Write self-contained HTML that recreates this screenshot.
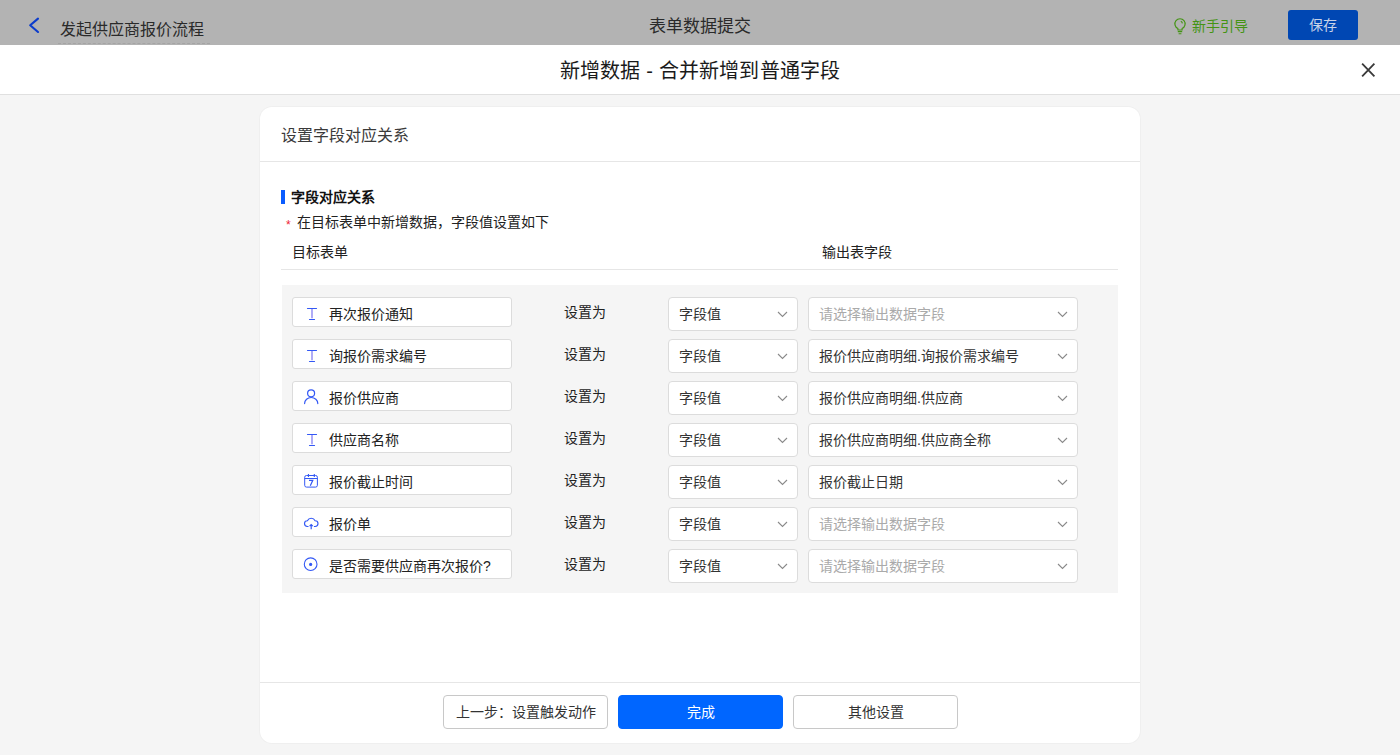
<!DOCTYPE html>
<html lang="zh-CN"><head><meta charset="utf-8">
<style>
*{box-sizing:border-box;margin:0;padding:0}
html,body{width:1400px;height:755px;overflow:hidden;background:#f5f5f5;font-family:"Liberation Sans",sans-serif;color:#333}
.abs{position:absolute;white-space:nowrap}
#top{position:absolute;left:0;top:0;width:1400px;height:45px;background:#b3b3b3}
#mhead{position:absolute;left:0;top:45px;width:1400px;height:50px;background:#fff;border-bottom:1px solid #e0e0e0}
#card{position:absolute;left:260px;top:107px;width:880px;height:636px;background:#fff;border-radius:12px;box-shadow:0 0 0 1px rgba(0,0,0,0.025)}
.t{position:absolute;white-space:nowrap;line-height:1}
.inp{position:absolute;left:292px;width:220px;height:30px;background:#fff;border:1px solid #dcdcdc;border-radius:3px}
.sel{position:absolute;height:34px;background:#fff;border:1px solid #dcdcdc;border-radius:4px}
.btn{position:absolute;top:695px;width:165px;height:34px;border:1px solid #c8c8c8;border-radius:4px;background:#fff;font-size:14px;line-height:32px;text-align:center;color:#333}
</style></head><body>
<div id="top">
  <svg class="abs" style="left:26px;top:15px" width="16" height="20" viewBox="0 0 16 20"><path d="M12 3.6 L4.2 10.3 L12 17" fill="none" stroke="#0c3ccc" stroke-width="2.1" stroke-linecap="round" stroke-linejoin="round"/></svg>
  <div class="t" style="left:60px;top:22px;font-size:16px;color:#2a2a2a">发起供应商报价流程</div>
  <div class="abs" style="left:58px;top:43px;width:152px;border-top:1px dashed #a4a4a4"></div>
  <div class="t" style="left:649px;top:18px;font-size:17px;color:#2a2a2a">表单数据提交</div>
  <svg class="abs" style="left:1172px;top:17px" width="16" height="20" viewBox="0 0 16 20"><path d="M5.9 13V11.45A5.1 5.1 0 1 1 10.1 11.45V13Z" fill="none" stroke="#449414" stroke-width="1.15" stroke-linejoin="round"/><path d="M8.8 4.2A2.6 2.6 0 0 1 10.4 6.4" fill="none" stroke="#449414" stroke-width="1.1"/><path d="M5.8 14.6h4.4M6.6 16.7h2.8" stroke="#449414" stroke-width="1.1"/></svg>
  <div class="t" style="left:1192px;top:19px;font-size:14px;color:#449414">新手引导</div>
  <div class="abs" style="left:1288px;top:10px;width:70px;height:30px;background:#0047b3;border-radius:3px;color:#c8d3e8;font-size:14px;line-height:30px;text-align:center">保存</div>
</div>
<div id="mhead">
  <div class="t" style="left:560px;top:16px;font-size:20px;letter-spacing:0.15px;color:#1a1a1a">新增数据 - 合并新增到普通字段</div>
  <svg class="abs" style="left:1360px;top:17px" width="16" height="16" viewBox="0 0 15 15"><path d="M2 1.5L13.5 13.5M13.5 1.5L2 13.5" stroke="#3a3a3a" stroke-width="1.7"/></svg>
</div>
<div id="card">
  <div class="t" style="left:21px;top:21px;font-size:16px;color:#3a3a3a">设置字段对应关系</div>
  <div class="abs" style="left:0;top:54px;width:880px;border-top:1px solid #e6e6e6"></div>
  <div class="abs" style="left:21px;top:83px;width:4px;height:14px;background:#0a5cff"></div>
  <div class="t" style="left:31px;top:83px;font-size:14px;font-weight:bold;color:#111">字段对应关系</div>
  <div class="t" style="left:26px;top:112px;font-size:12px;color:#e23">*</div>
  <div class="t" style="left:37px;top:108px;font-size:14px;color:#222">在目标表单中新增数据，字段值设置如下</div>
  <div class="t" style="left:32px;top:138px;font-size:14px;color:#222">目标表单</div>
  <div class="t" style="left:562px;top:138px;font-size:14px;color:#222">输出表字段</div>
  <div class="abs" style="left:21px;top:162px;width:837px;border-top:1px solid #e6e6e6"></div>
  <div class="abs" style="left:22px;top:178px;width:836px;height:308px;background:#f5f5f5"></div>
  <div class="abs" style="left:0;top:575px;width:880px;border-top:1px solid #e6e6e6"></div>
</div>
<div id="rows">
<div class="inp" style="top:297px"><svg class="abs" style="left:12px;top:7px" width="14" height="16" viewBox="0 0 14 16"><path d="M7 3.5V13.2" stroke="#7a74f2" stroke-width="1.2"/><path d="M2.5 3.5h9M4.5 14.5h5" fill="none" stroke="#3358f5" stroke-width="1.2" stroke-linecap="round"/></svg><div class="t" style="left:36px;top:9px;font-size:14px;color:#222">再次报价通知</div></div>
<div class="t" style="left:564px;top:305px;font-size:14px;color:#222">设置为</div>
<div class="sel" style="left:668px;top:297px;width:130px"><div class="t" style="left:10px;top:9px;font-size:14px;color:#333">字段值</div><svg class="abs" style="right:9px;top:13px" width="11" height="7" viewBox="0 0 11 7"><path d="M1 1l4.5 4.5L10 1" fill="none" stroke="#8a8a8a" stroke-width="1.1"/></svg></div>
<div class="sel" style="left:808px;top:297px;width:270px"><div class="t" style="left:10px;top:9px;font-size:14px;color:#aaa">请选择输出数据字段</div><svg class="abs" style="right:9px;top:13px" width="11" height="7" viewBox="0 0 11 7"><path d="M1 1l4.5 4.5L10 1" fill="none" stroke="#8a8a8a" stroke-width="1.1"/></svg></div>
<div class="inp" style="top:339px"><svg class="abs" style="left:12px;top:7px" width="14" height="16" viewBox="0 0 14 16"><path d="M7 3.5V13.2" stroke="#7a74f2" stroke-width="1.2"/><path d="M2.5 3.5h9M4.5 14.5h5" fill="none" stroke="#3358f5" stroke-width="1.2" stroke-linecap="round"/></svg><div class="t" style="left:36px;top:9px;font-size:14px;color:#222">询报价需求编号</div></div>
<div class="t" style="left:564px;top:347px;font-size:14px;color:#222">设置为</div>
<div class="sel" style="left:668px;top:339px;width:130px"><div class="t" style="left:10px;top:9px;font-size:14px;color:#333">字段值</div><svg class="abs" style="right:9px;top:13px" width="11" height="7" viewBox="0 0 11 7"><path d="M1 1l4.5 4.5L10 1" fill="none" stroke="#8a8a8a" stroke-width="1.1"/></svg></div>
<div class="sel" style="left:808px;top:339px;width:270px"><div class="t" style="left:10px;top:9px;font-size:14px;color:#333">报价供应商明细.询报价需求编号</div><svg class="abs" style="right:9px;top:13px" width="11" height="7" viewBox="0 0 11 7"><path d="M1 1l4.5 4.5L10 1" fill="none" stroke="#8a8a8a" stroke-width="1.1"/></svg></div>
<div class="inp" style="top:381px"><svg class="abs" style="left:10px;top:6px" width="17" height="17" viewBox="0 0 17 17"><circle cx="8.1" cy="5.3" r="3.5" fill="none" stroke="#3358f5" stroke-width="1.2"/><path d="M1.6 15.6A6.6 6.1 0 0 1 14.8 15.6" fill="none" stroke="#3358f5" stroke-width="1.2" stroke-linecap="round"/></svg><div class="t" style="left:36px;top:9px;font-size:14px;color:#222">报价供应商</div></div>
<div class="t" style="left:564px;top:389px;font-size:14px;color:#222">设置为</div>
<div class="sel" style="left:668px;top:381px;width:130px"><div class="t" style="left:10px;top:9px;font-size:14px;color:#333">字段值</div><svg class="abs" style="right:9px;top:13px" width="11" height="7" viewBox="0 0 11 7"><path d="M1 1l4.5 4.5L10 1" fill="none" stroke="#8a8a8a" stroke-width="1.1"/></svg></div>
<div class="sel" style="left:808px;top:381px;width:270px"><div class="t" style="left:10px;top:9px;font-size:14px;color:#333">报价供应商明细.供应商</div><svg class="abs" style="right:9px;top:13px" width="11" height="7" viewBox="0 0 11 7"><path d="M1 1l4.5 4.5L10 1" fill="none" stroke="#8a8a8a" stroke-width="1.1"/></svg></div>
<div class="inp" style="top:423px"><svg class="abs" style="left:12px;top:7px" width="14" height="16" viewBox="0 0 14 16"><path d="M7 3.5V13.2" stroke="#7a74f2" stroke-width="1.2"/><path d="M2.5 3.5h9M4.5 14.5h5" fill="none" stroke="#3358f5" stroke-width="1.2" stroke-linecap="round"/></svg><div class="t" style="left:36px;top:9px;font-size:14px;color:#222">供应商名称</div></div>
<div class="t" style="left:564px;top:431px;font-size:14px;color:#222">设置为</div>
<div class="sel" style="left:668px;top:423px;width:130px"><div class="t" style="left:10px;top:9px;font-size:14px;color:#333">字段值</div><svg class="abs" style="right:9px;top:13px" width="11" height="7" viewBox="0 0 11 7"><path d="M1 1l4.5 4.5L10 1" fill="none" stroke="#8a8a8a" stroke-width="1.1"/></svg></div>
<div class="sel" style="left:808px;top:423px;width:270px"><div class="t" style="left:10px;top:9px;font-size:14px;color:#333">报价供应商明细.供应商全称</div><svg class="abs" style="right:9px;top:13px" width="11" height="7" viewBox="0 0 11 7"><path d="M1 1l4.5 4.5L10 1" fill="none" stroke="#8a8a8a" stroke-width="1.1"/></svg></div>
<div class="inp" style="top:465px"><svg class="abs" style="left:10px;top:7px" width="16" height="16" viewBox="0 0 16 16"><rect x="1.7" y="2.5" width="12.7" height="11.6" rx="1.8" fill="none" stroke="#3358f5" stroke-width="1"/><path d="M1.7 5.45h12.7M5.45 1v3M11.3 1v3" fill="none" stroke="#3358f5" stroke-width="1.1"/><path d="M6 7.3h3.8L7.3 12.7" fill="none" stroke="#3358f5" stroke-width="1.2"/></svg><div class="t" style="left:36px;top:9px;font-size:14px;color:#222">报价截止时间</div></div>
<div class="t" style="left:564px;top:473px;font-size:14px;color:#222">设置为</div>
<div class="sel" style="left:668px;top:465px;width:130px"><div class="t" style="left:10px;top:9px;font-size:14px;color:#333">字段值</div><svg class="abs" style="right:9px;top:13px" width="11" height="7" viewBox="0 0 11 7"><path d="M1 1l4.5 4.5L10 1" fill="none" stroke="#8a8a8a" stroke-width="1.1"/></svg></div>
<div class="sel" style="left:808px;top:465px;width:270px"><div class="t" style="left:10px;top:9px;font-size:14px;color:#333">报价截止日期</div><svg class="abs" style="right:9px;top:13px" width="11" height="7" viewBox="0 0 11 7"><path d="M1 1l4.5 4.5L10 1" fill="none" stroke="#8a8a8a" stroke-width="1.1"/></svg></div>
<div class="inp" style="top:507px"><svg class="abs" style="left:10px;top:8px" width="17" height="16" viewBox="0 0 17 16"><path d="M5.5 10.5H4.4A2.9 2.9 0 0 1 4.4 4.7A4.28 4.28 0 0 1 12.1 4.7A2.9 2.9 0 0 1 12.1 10.5H10.9" fill="none" stroke="#3358f5" stroke-width="1.15"/><path d="M8.2 13.2V8.8M6.6 10.2L8.2 8.6L9.8 10.2" fill="none" stroke="#3358f5" stroke-width="1.2"/></svg><div class="t" style="left:36px;top:9px;font-size:14px;color:#222">报价单</div></div>
<div class="t" style="left:564px;top:515px;font-size:14px;color:#222">设置为</div>
<div class="sel" style="left:668px;top:507px;width:130px"><div class="t" style="left:10px;top:9px;font-size:14px;color:#333">字段值</div><svg class="abs" style="right:9px;top:13px" width="11" height="7" viewBox="0 0 11 7"><path d="M1 1l4.5 4.5L10 1" fill="none" stroke="#8a8a8a" stroke-width="1.1"/></svg></div>
<div class="sel" style="left:808px;top:507px;width:270px"><div class="t" style="left:10px;top:9px;font-size:14px;color:#aaa">请选择输出数据字段</div><svg class="abs" style="right:9px;top:13px" width="11" height="7" viewBox="0 0 11 7"><path d="M1 1l4.5 4.5L10 1" fill="none" stroke="#8a8a8a" stroke-width="1.1"/></svg></div>
<div class="inp" style="top:549px"><svg class="abs" style="left:10px;top:7px" width="16" height="16" viewBox="0 0 16 16"><circle cx="7.65" cy="7.2" r="6.35" fill="none" stroke="#3358f5" stroke-width="1.1"/><circle cx="7.65" cy="7.4" r="1.6" fill="#3358f5"/></svg><div class="t" style="left:36px;top:9px;font-size:14px;color:#222">是否需要供应商再次报价?</div></div>
<div class="t" style="left:564px;top:557px;font-size:14px;color:#222">设置为</div>
<div class="sel" style="left:668px;top:549px;width:130px"><div class="t" style="left:10px;top:9px;font-size:14px;color:#333">字段值</div><svg class="abs" style="right:9px;top:13px" width="11" height="7" viewBox="0 0 11 7"><path d="M1 1l4.5 4.5L10 1" fill="none" stroke="#8a8a8a" stroke-width="1.1"/></svg></div>
<div class="sel" style="left:808px;top:549px;width:270px"><div class="t" style="left:10px;top:9px;font-size:14px;color:#aaa">请选择输出数据字段</div><svg class="abs" style="right:9px;top:13px" width="11" height="7" viewBox="0 0 11 7"><path d="M1 1l4.5 4.5L10 1" fill="none" stroke="#8a8a8a" stroke-width="1.1"/></svg></div>
</div>
<div class="btn" style="left:443px">上一步：设置触发动作</div>
<div class="btn" style="left:618px;background:#0066ff;border-color:#0066ff;color:#fff">完成</div>
<div class="btn" style="left:793px">其他设置</div>
</body></html>
